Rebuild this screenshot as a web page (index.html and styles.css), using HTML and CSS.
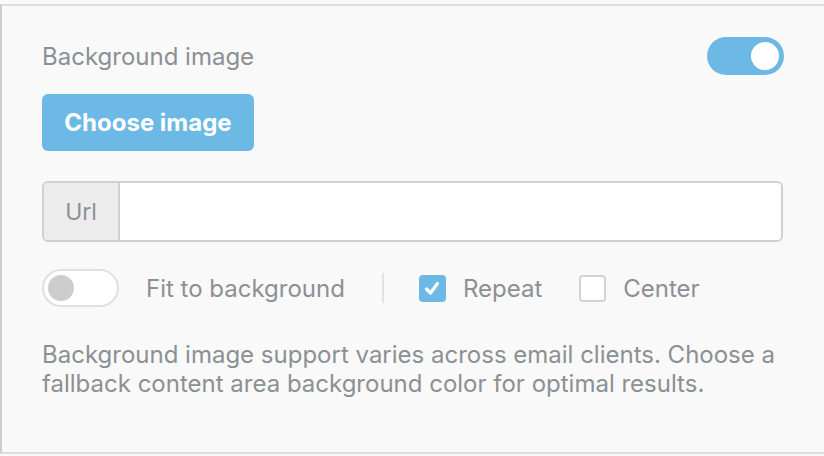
FILE: index.html
```html
<!DOCTYPE html>
<html lang="en">
<head>
    <meta charset="UTF-8">
    <title>Background image</title>
    <link rel="stylesheet" href="styles.css">
</head>
<body>
    <div class="panel">
        <div class="header">
            <span class="title">Background image</span>
            <span class="toggle on"><span class="knob"></span></span>
        </div>

        <button class="choose">Choose image</button>

        <div class="url-group">
            <span class="addon">Url</span>
            <input class="url-input" type="text">
        </div>

        <div class="options">
            <span class="toggle off"><span class="knob"></span></span>
            <span class="label fit">Fit to background</span>
            <span class="divider"></span>
            <span class="check checked">
                <svg width="18" height="18" viewBox="0 0 18 18"><path d="M3.5 10 L7.5 14 L14.5 4.5" fill="none" stroke="#fff" stroke-width="3.2" stroke-linecap="round" stroke-linejoin="round"/></svg>
            </span>
            <span class="label">Repeat</span>
            <span class="check"></span>
            <span class="label">Center</span>
        </div>

        <p class="note">Background image support varies across email clients. Choose a fallback content area background color for optimal results.</p>
    </div>
</body>
</html>
```

FILE: styles.css
```css
html, body {
    margin: 0;
    padding: 0;
    background: #f9f9f9;
}
body {
    font-family: Inter, "Noto Sans", sans-serif;
    color: #8b9095;
    padding-top: 4px;
}
.panel {
    border-left: 2px solid #cfcfcf;
    border-top: 2px solid #dedede;
    border-bottom: 2px solid #dedede;
    height: 450px;
    padding: 0 40px 0 40px;
    box-sizing: border-box;
    width: 824px;
}
.header {
    display: flex;
    justify-content: space-between;
    align-items: center;
    margin-top: 31px;
    height: 38px;
}
.title {
    font-size: 24px;
}
.toggle {
    position: relative;
    display: inline-block;
    width: 77px;
    height: 38px;
    border-radius: 19px;
    box-sizing: border-box;
    flex: none;
}
.toggle.on {
    background: #6cb9e6;
}
.toggle.off {
    background: #fff;
    border: 2px solid #e0e0e0;
}
.knob {
    position: absolute;
    width: 28px;
    height: 28px;
    border-radius: 50%;
    top: 5px;
}
.toggle.on .knob {
    background: #fff;
    right: 5px;
}
.toggle.off .knob {
    background: #cdcdcd;
    width: 26px;
    height: 26px;
    top: 4px;
    left: 4px;
}
.choose {
    display: block;
    margin-top: 19px;
    width: 212px;
    height: 57px;
    border: none;
    border-radius: 6px;
    background: #6cb9e6;
    color: #fff;
    font-family: Inter, "Noto Sans", sans-serif;
    font-weight: 700;
    font-size: 24px;
    padding: 0;
}
.url-group {
    display: flex;
    margin-top: 30px;
    height: 61px;
    border: 2px solid #d0d0d0;
    border-radius: 6px;
    box-sizing: border-box;
    overflow: hidden;
    width: 741px;
}
.addon {
    width: 74px;
    background: #ececec;
    border-right: 2px solid #d0d0d0;
    display: flex;
    align-items: center;
    justify-content: center;
    font-size: 23px;
}
.url-input {
    flex: 1;
    border: none;
    background: #fff;
    outline: none;
}
.options {
    display: flex;
    align-items: center;
    margin-top: 27px;
    height: 38px;
}
.label {
    font-size: 24px;
}
.fit {
    margin-left: 27px;
}
.divider {
    width: 2px;
    height: 30px;
    background: #e2e2e2;
    margin: 0 35px 0 37px;
}
.check {
    width: 27px;
    height: 27px;
    box-sizing: border-box;
    border: 2px solid #d3d3d3;
    border-radius: 4px;
    background: #fff;
    margin-right: 17px;
    display: flex;
    align-items: center;
    justify-content: center;
}
.check.checked {
    background: #6cb9e6;
    border: none;
}
.label + .check {
    margin-left: 37px;
}
.note {
    font-size: 24px;
    line-height: 29px;
    margin: 33px 0 0 0;
    width: 745px;
}
```
